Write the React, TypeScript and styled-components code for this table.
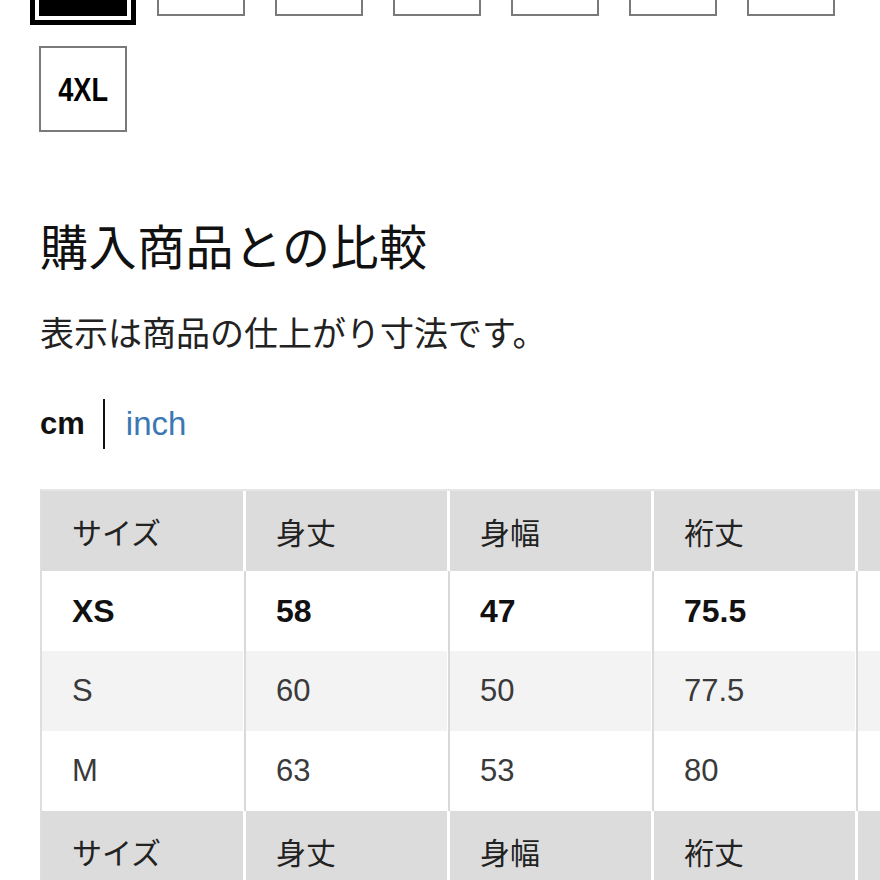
import React from 'react'
import styled, { createGlobalStyle } from 'styled-components'

const GlobalStyle = createGlobalStyle`
  html, body {
    margin: 0;
    padding: 0;
    background: #fff;
    overflow: hidden;
  }
  body {
    font-family: "Liberation Sans", "Noto Sans CJK JP", sans-serif;
    color: #1a1a1a;
  }
`

// the first row has scrolled above the top edge, so only its frames show
const sizes = ['', '', '', '', '', '', '', '4XL']
// fifth column runs off the right edge; its label is not visible
const headers = ['サイズ', '身丈', '身幅', '裄丈', '']

type Row = { size: string; values: string[]; bold?: boolean; tint?: boolean }

const rows: Row[] = [
  { size: 'XS', values: ['58', '47', '75.5', ''], bold: true },
  { size: 'S', values: ['60', '50', '77.5', ''], tint: true },
  { size: 'M', values: ['63', '53', '80', ''] },
]

const Page = styled.div`
  width: 880px;
  height: 880px;
  overflow: hidden;
  padding: 0 0 0 39px;
  box-sizing: border-box;
`

const SizeGrid = styled.div`
  display: flex;
  flex-wrap: wrap;
  gap: 30px;
  width: 820px;
  margin-top: -70px;
`

const SizeBox = styled.div<{ $active?: boolean }>`
  width: 88px;
  height: 86px;
  box-sizing: border-box;
  border: 2px solid ${p => (p.$active ? '#000' : '#7a7a7a')};
  background: ${p => (p.$active ? '#000' : '#fff')};
  color: ${p => (p.$active ? '#fff' : '#000')};
  outline: ${p => (p.$active ? '5px solid #000' : 'none')};
  outline-offset: 4px;
  display: flex;
  align-items: center;
  justify-content: center;
`

const SizeLabel = styled.span`
  display: inline-block;
  font-family: "Liberation Sans", sans-serif;
  font-weight: 700;
  font-size: 34px;
  transform: scaleX(0.8);
`

const Title = styled.h2`
  margin: 82px 0 0 1px;
  font-family: "Noto Sans CJK JP", sans-serif;
  font-weight: 400;
  font-size: 48px;
  line-height: 60px;
  color: #111;
  letter-spacing: 0.5px;
`

const Note = styled.p`
  margin: 38px 0 0 1px;
  font-family: "Noto Sans CJK JP", sans-serif;
  font-size: 34px;
  line-height: 40px;
  color: #222;
`

const UnitSwitch = styled.div`
  margin: 47px 0 0 1px;
  display: flex;
  align-items: center;
  height: 50px;
`

const Unit = styled.span<{ $active?: boolean }>`
  font-size: ${p => (p.$active ? '31px' : '33px')};
  font-weight: ${p => (p.$active ? 700 : 400)};
  color: ${p => (p.$active ? '#111' : '#3b78b3')};
`

const Divider = styled.span`
  width: 2px;
  height: 50px;
  background: #111;
  margin: 0 21px 0 18px;
`

const Table = styled.div`
  margin-top: 40px;
  margin-left: 1px;
  border-left: 2px solid #dedede;
  border-top: 2px solid #e6e6e6;
  width: 900px;
`

const TableRow = styled.div<{ $bg: string }>`
  display: grid;
  grid-template-columns: repeat(5, 201px);
  column-gap: 3px;
  height: 80px;
  background: #fff;

  & > div {
    background: ${p => p.$bg};
  }
`

const Cell = styled.div<{ $bold?: boolean; $head?: boolean; $line?: boolean }>`
  display: flex;
  align-items: center;
  padding-left: 30px;
  font-family: ${p => (p.$head ? '"Noto Sans CJK JP", sans-serif' : '"Liberation Sans", sans-serif')};
  font-size: ${p => (p.$head ? '30px' : p.$bold ? '32px' : '31px')};
  font-weight: ${p => (p.$bold ? 700 : 400)};
  color: ${p => (p.$bold ? '#111' : p.$head ? '#222' : '#3a3a3a')};
  box-shadow: ${p => (p.$line ? '-2px 0 0 #d9d9d9' : 'none')};
`

const HeaderRow = () => (
  <TableRow $bg="#dcdcdc">
    {headers.map((h, i) => (
      <Cell key={i} $head>{h}</Cell>
    ))}
  </TableRow>
)

export default function App() {
  return (
    <Page>
      <GlobalStyle />
      <SizeGrid>
        {sizes.map((s, i) => (
          <SizeBox key={i} $active={i === 0}>
            {s && <SizeLabel>{s}</SizeLabel>}
          </SizeBox>
        ))}
      </SizeGrid>

      <Title>購入商品との比較</Title>
      <Note>表示は商品の仕上がり寸法です。</Note>

      <UnitSwitch>
        <Unit $active>cm</Unit>
        <Divider />
        <Unit>inch</Unit>
      </UnitSwitch>

      <Table>
        <HeaderRow />
        {rows.map(r => (
          <TableRow key={r.size} $bg={r.tint ? '#f3f3f3' : '#fff'}>
            <Cell $bold={r.bold}>{r.size}</Cell>
            {r.values.map((v, i) => (
              <Cell key={i} $bold={r.bold} $line>{v}</Cell>
            ))}
          </TableRow>
        ))}
        <HeaderRow />
      </Table>
    </Page>
  )
}
